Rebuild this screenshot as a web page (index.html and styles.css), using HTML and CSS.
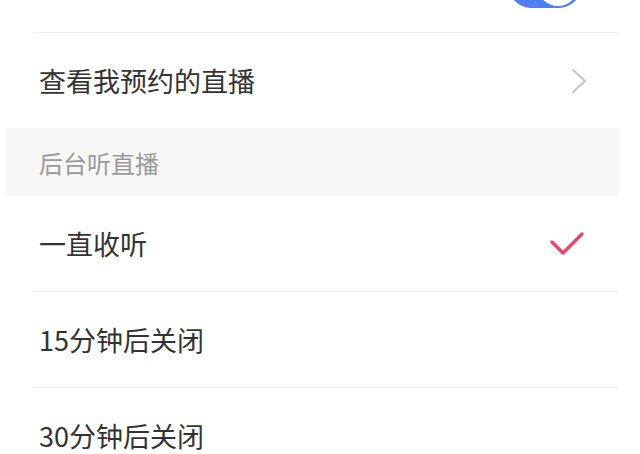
FILE: index.html
```html
<!DOCTYPE html>
<html lang="zh-CN">
<head>
<meta charset="utf-8">
<link rel="stylesheet" href="styles.css">
</head>
<body>
<div class="list">
  <div class="row row-top">
    <div class="cell">
      <span class="label"></span>
      <span class="switch"><span class="knob"></span></span>
    </div>
  </div>
  <div class="row">
    <div class="cell cell-last">
      <span class="label">查看我预约的直播</span>
      <svg class="chevron" width="16" height="26" viewBox="0 0 16 26"><polyline points="2,2 14,13 2,24" fill="none" stroke="#c6c6c6" stroke-width="2.2" stroke-linecap="round" stroke-linejoin="round"/></svg>
    </div>
  </div>
  <div class="section">后台听直播</div>
  <div class="row">
    <div class="cell">
      <span class="label">一直收听</span>
      <svg class="check" width="34" height="24" viewBox="0 0 34 24"><polyline points="2,10 13,21 32,2" fill="none" stroke="#e8476b" stroke-width="3.4" stroke-linecap="round" stroke-linejoin="round"/></svg>
    </div>
  </div>
  <div class="row">
    <div class="cell">
      <span class="label">15分钟后关闭</span>
    </div>
  </div>
  <div class="row">
    <div class="cell">
      <span class="label">30分钟后关闭</span>
    </div>
  </div>
</div>
</body>
</html>
```
FILE: styles.css
```css
html, body {
  margin: 0;
  padding: 0;
  background: #ffffff;
}
html {
  height: 454px;
  overflow: hidden;
}
body {
  width: 640px;
  height: 454px;
  overflow: hidden;
  font-family: "Noto Sans CJK SC", "Noto Sans", sans-serif;
}
.list {
  margin-left: 6px;
  width: 613px;
}
.row {
  padding-left: 27px;
  background: #ffffff;
}
.row-top {
  margin-top: -63px;
}
.cell {
  height: 95px;
  display: flex;
  align-items: center;
  justify-content: space-between;
  border-bottom: 1px solid #eeeeee;
  padding-left: 6px;
  padding-right: 34px;
}
.row-top .cell {
  padding-right: 38px;
}
.cell-last {
  border-bottom: none;
}
.label {
  font-size: 27px;
  color: #333333;
  line-height: 1;
}
.chevron {
  display: block;
  margin-right: -2px;
}
.check {
  display: block;
  margin-right: 1px;
}
.section {
  height: 68px;
  background: #f7f7f7;
  display: flex;
  align-items: center;
  padding-left: 33px;
  font-size: 24px;
  color: #9a9a9a;
}
.switch {
  position: relative;
  display: block;
  width: 72px;
  height: 44px;
  border-radius: 22px;
  background: #4f7ff0;
  margin-top: 2px;
}
.knob {
  position: absolute;
  right: 3px;
  top: 2px;
  width: 40px;
  height: 40px;
  border-radius: 50%;
  background: #ffffff;
}
```
